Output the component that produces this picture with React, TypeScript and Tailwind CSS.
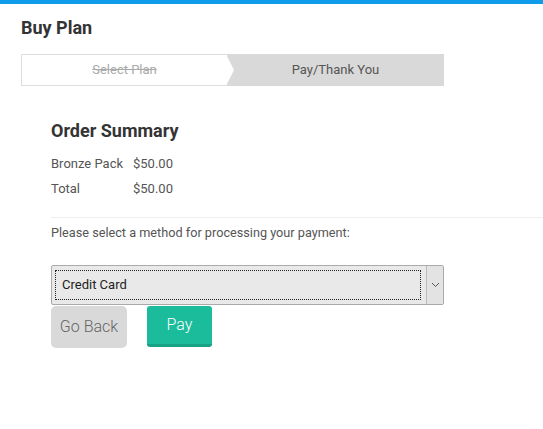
import { useState } from "react";

export default function App() {
  const [method, setMethod] = useState("Credit Card");

  return (
    <div className="min-h-screen bg-white text-[#333]" style={{ fontFamily: "Roboto, 'Liberation Sans', sans-serif" }}>
      <div className="h-[4px] bg-[#0e9bea]" />

      <div className="px-[21px]">
        <h1 className="pt-[12px] text-[18px] font-bold leading-[24px] text-[#333]">Buy Plan</h1>

        {/* stepper */}
        <div className="mt-[14px] flex h-[32px] w-[423px] text-[13px]">
          <div className="relative flex w-[206px] items-center justify-center border border-r-0 border-[#ddd] bg-white">
            <span className="text-[#aaa] line-through">Select Plan</span>
            <svg className="absolute right-[-7px] top-[-1px] z-10" width="8" height="32" viewBox="0 0 8 32">
              <polygon points="0,0 8,16 0,32" fill="#fff" />
            </svg>
          </div>
          <div className="flex flex-1 items-center justify-center bg-[#d9d9d9] text-[#555]">Pay/Thank You</div>
        </div>
      </div>

      <div className="pl-[51px]">
        <h2 className="mt-[33px] text-[18px] font-bold leading-[24px] text-[#333]">Order Summary</h2>
        <table className="mt-[8px] text-[13px] text-[#555]">
          <tbody>
            <tr className="h-[25px]">
              <td className="w-[82px]">Bronze Pack</td>
              <td>$50.00</td>
            </tr>
            <tr className="h-[25px]">
              <td>Total</td>
              <td>$50.00</td>
            </tr>
          </tbody>
        </table>

        <hr className="mt-[16px] border-t border-[#eee]" />
        <p className="mt-[6px] text-[12.7px] leading-[18px] text-[#555]">Please select a method for processing your payment:</p>

        <div className="relative mt-[23px] h-[40px] w-[393px] rounded-[2px] border border-[#aaa] bg-[#e9e9e9]">
          <div className="absolute left-[3px] right-[22px] top-[4px] bottom-[4px] flex items-center border border-dotted border-[#222] pl-[6px] text-[13px] text-[#222]">
            {method}
          </div>
          <select
            value={method}
            onChange={(e) => setMethod(e.target.value)}
            className="absolute inset-0 cursor-pointer opacity-0"
          >
            <option>Credit Card</option>
            <option>PayPal</option>
          </select>
          <div className="pointer-events-none absolute bottom-0 right-0 top-0 flex w-[17px] items-center justify-center border-l border-[#bbb] bg-[#e3e3e3]">
            <svg width="9" height="6" viewBox="0 0 9 6">
              <polyline points="1,1 4.5,4.5 8,1" fill="none" stroke="#555" strokeWidth="1" />
            </svg>
          </div>
        </div>

        <div className="mt-[1px] flex gap-[20px]">
          <button className="h-[42px] w-[76px] rounded-[5px] bg-[#d9d9d9] text-[16px] font-light text-[#666]">Go Back</button>
          <button className="h-[41px] w-[65px] rounded-[3px] border-b-[3px] border-[#17a286] bg-[#1abc9c] text-[16px] font-light text-white">Pay</button>
        </div>
      </div>
    </div>
  );
}
